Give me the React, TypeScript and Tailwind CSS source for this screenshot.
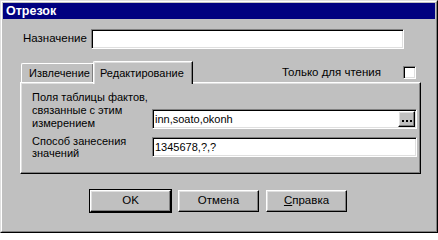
const sunken =
  "border border-t-[#808080] border-l-[#808080] border-r-white border-b-white shadow-[inset_1px_1px_0_#000,inset_-1px_-1px_0_#dfdfdf] bg-white";
const raised =
  "border border-t-white border-l-white border-r-black border-b-black shadow-[inset_-1px_-1px_0_#808080,inset_1px_1px_0_#dfdfdf] bg-[#c0c0c0]";

const TextBox = ({ value, width, children }: { value: string; width: string; children?: React.ReactNode }) => (
  <div className={`${sunken} ${width} h-[20px] flex items-center pl-[2px] pr-[1px]`}>
    <span className="flex-1 leading-none">{value}</span>
    {children}
  </div>
);

const PushButton = ({ children, isDefault }: { children: React.ReactNode; isDefault?: boolean }) => (
  <div className={isDefault ? "border border-black" : "p-px"}>
    <div className={`${raised} w-[81px] h-[22px] flex items-center justify-center text-[11.5px]`}>{children}</div>
  </div>
);

export default function App() {
  return (
    <div
      className="w-[438px] h-[233px] bg-[#c0c0c0] border border-t-[#dfdfdf] border-l-[#dfdfdf] border-r-black border-b-black text-[11px] text-black"
      style={{ fontFamily: '"Liberation Sans", Arial, sans-serif' }}
    >
      <div className="h-full border border-t-white border-l-white border-r-[#808080] border-b-[#808080] p-px flex flex-col">
        <div className="h-[16px] bg-[#000080] text-white font-bold text-[12.5px] flex items-center pl-[3px]">
          Отрезок
        </div>

        <div className="pl-[17px] flex flex-col">
          <div className="mt-[10px] flex items-center">
            <span className="ml-[3px] w-[68px] text-[11.5px]">Назначение</span>
            <TextBox value="" width="w-[313px]" />
          </div>

          <div className="mt-[12px] w-[400px] flex items-end justify-between">
            <div className="flex items-end">
              <div className="w-[73px] h-[19px] bg-[#c0c0c0] border-l border-t border-l-white border-t-white border-r border-r-black shadow-[inset_-1px_0_0_#808080] rounded-tl-[2px] flex items-center pl-[7px] ml-[1px]">
                Извлечение
              </div>
              <div className="relative z-10 -ml-px -mb-[2px] w-[100px] h-[23px] bg-[#c0c0c0] border-l border-t border-l-white border-t-white border-r border-r-black shadow-[inset_-1px_0_0_#808080,inset_1px_1px_0_#dfdfdf] rounded-tl-[2px] flex items-start pt-[3px] pl-[6px]">
                Редактирование
              </div>
            </div>
            <div className="self-start mt-[3px] flex items-center mr-[4px]">
              <span className="mr-[22px] text-[11.5px]">Только для чтения</span>
              <div className={`${sunken} w-[13px] h-[13px]`} />
            </div>
          </div>

          <div className={`${raised} w-[401px] h-[92px] pl-[11px] pt-[8px] flex flex-col gap-[5px]`}>
            <div className="flex items-end">
              <div className="w-[120px] leading-[13px]">
                Поля таблицы фактов,
                <br />
                связанные с этим
                <br />
                измерением
              </div>
              <div className="mb-[1px]">
                <TextBox value="inn,soato,okonh" width="w-[265px]">
                  <div className={`${raised} w-[17px] h-[16px] flex items-center justify-center gap-[2px] pt-[4px]`}>
                    <span className="w-[2px] h-[2px] bg-black" />
                    <span className="w-[2px] h-[2px] bg-black" />
                    <span className="w-[2px] h-[2px] bg-black" />
                  </div>
                </TextBox>
              </div>
            </div>
            <div className="flex items-center">
              <div className="w-[120px] leading-[12px]">
                Способ занесения
                <br />
                значений
              </div>
              <TextBox value="1345678,?,?" width="w-[265px]" />
            </div>
          </div>

          <div className="mt-[15px] flex gap-[5px] pl-[69px]">
            <PushButton isDefault>OK</PushButton>
            <PushButton>Отмена</PushButton>
            <PushButton>
              <span>
                <span className="underline">С</span>правка
              </span>
            </PushButton>
          </div>
        </div>
      </div>
    </div>
  );
}
